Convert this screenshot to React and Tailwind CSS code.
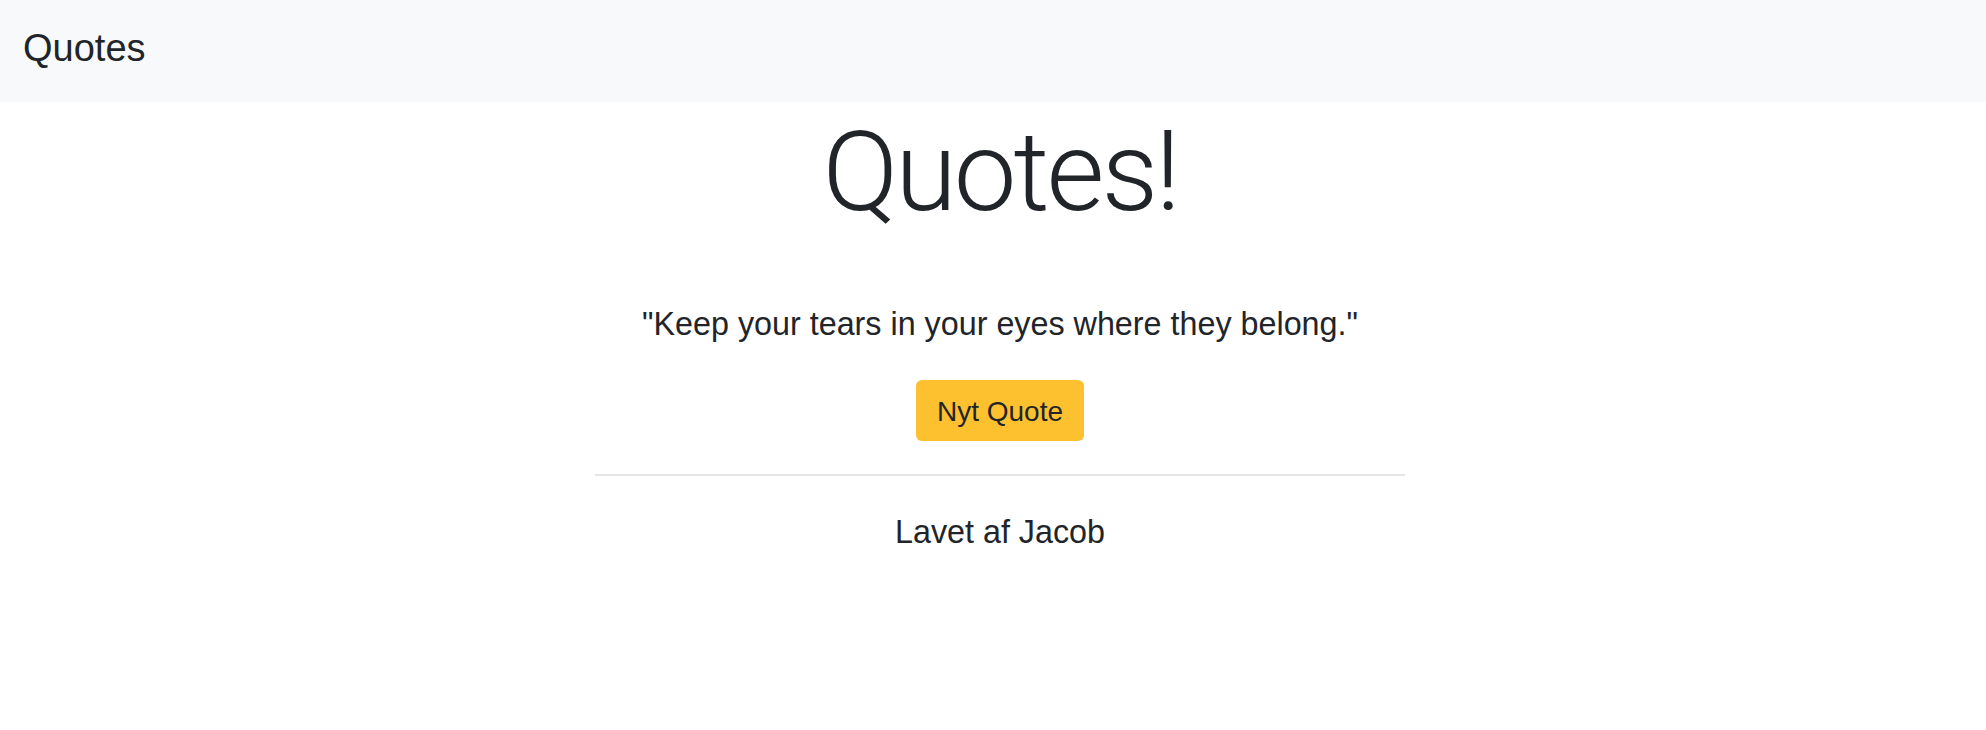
const App = () => {
  return (
    <div className="min-h-screen bg-white text-[#212529] font-['Liberation_Sans',Arial,sans-serif]">
      {/* Navbar */}
      <nav className="h-[102px] bg-[#f8f9fa] flex items-center px-[23px] pb-[6px]">
        <a href="#" className="text-[38px] leading-none text-[#212529]">
          Quotes
        </a>
      </nav>

      {/* Main */}
      <main className="flex flex-col items-center pl-[14px]">
        <h1 className="mt-[14px] text-[112px] leading-[112px] tracking-[-3px] font-light font-['Roboto',sans-serif] text-[#212529]">
          Quotes!
        </h1>

        <p className="mt-[72px] text-[32.3px] leading-[48px]">
          "Keep your tears in your eyes where they belong."
        </p>

        <button
          type="button"
          className="mt-[32px] h-[61px] w-[168px] rounded-[6px] bg-[#fdc02f] text-[28px] leading-none text-[#212529] flex items-center justify-center pt-[3px]"
        >
          Nyt Quote
        </button>

        <hr className="mt-[33px] w-[810px] border-0 border-t-2 border-[#e6e6e6]" />

        <p className="mt-[32px] text-[32.3px] leading-[48px]">Lavet af Jacob</p>
      </main>
    </div>
  )
}

export default App
